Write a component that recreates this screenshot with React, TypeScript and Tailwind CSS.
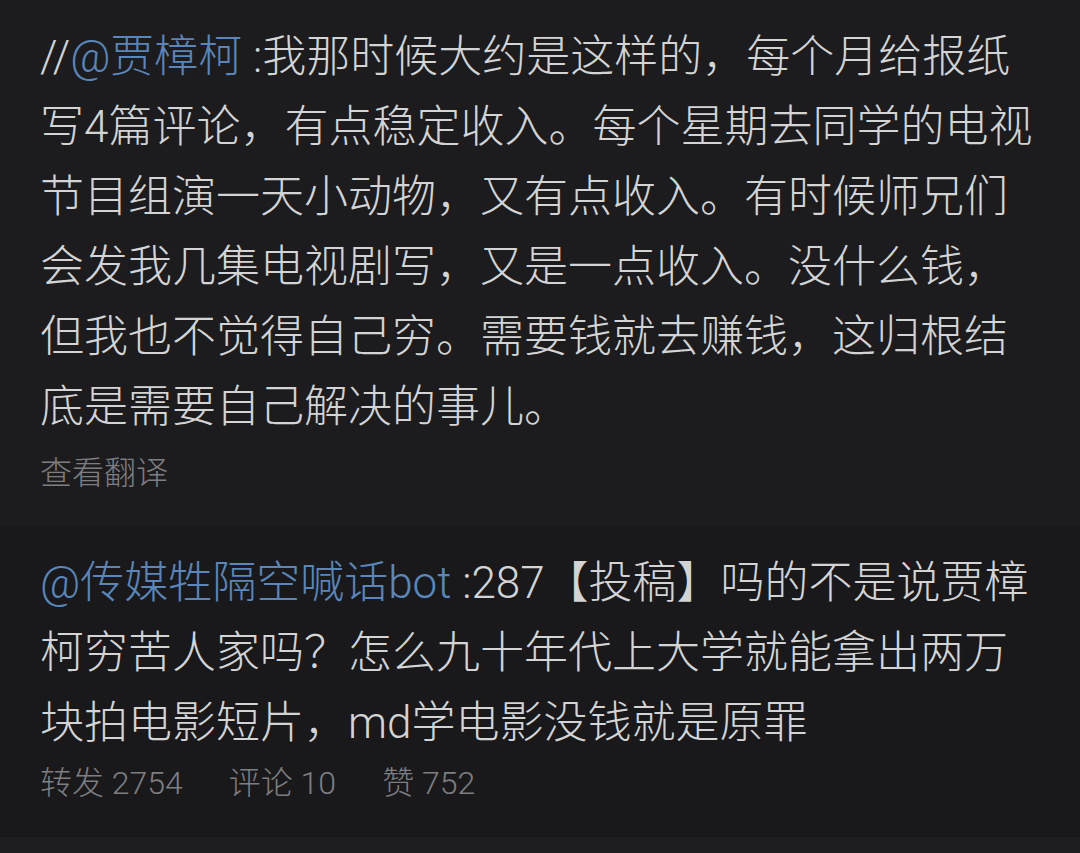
export default function App() {
  const font = { fontFamily: 'Roboto, "Noto Sans CJK SC", sans-serif' };
  return (
    <div className="w-[1080px] h-[853px] bg-[#1e1e20] flex flex-col font-light" style={font}>
      <div className="bg-[#1c1c1e] px-10 pt-[22px] pb-[31px]">
        <p className="text-[44px] leading-[70px] text-[#d4d4d4] w-[1000px]">
          <span>//</span>
          <span className="text-[#5a86b9]">@贾樟柯</span> :我那时候大约是这样的，每个月给报纸写4篇评论，有点稳定收入。每个星期去同学的电视节目组演一天小动物，又有点收入。有时候师兄们会发我几集电视剧写，又是一点收入。没什么钱，但我也不觉得自己穷。需要钱就去赚钱，这归根结底是需要自己解决的事儿。
        </p>
        <div className="mt-[9px] text-[32px] leading-[44px] text-[#7e7e80]">查看翻译</div>
      </div>
      <div className="bg-[#19191b] px-10 pt-[22px] pb-[32px]">
        <p className="text-[44px] leading-[70px] text-[#d4d4d4] w-[1000px]">
          <span className="text-[#5a86b9]">@传媒牲隔空喊话bot</span> :287【投稿】吗的不是说贾樟柯穷苦人家吗？怎么九十年代上大学就能拿出两万块拍电影短片，md学电影没钱就是原罪
        </p>
        <div className="mt-[3px] flex gap-[46px] text-[32px] leading-[44px] text-[#7e7e80]">
          <span>转发 2754</span>
          <span>评论 10</span>
          <span>赞 752</span>
        </div>
      </div>
    </div>
  );
}
